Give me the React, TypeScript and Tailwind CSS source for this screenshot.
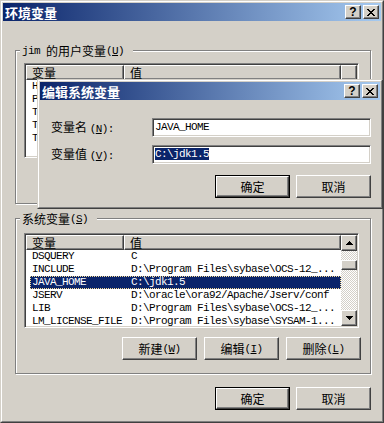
const CJK = "[font-family:'Noto_Sans_CJK_SC',sans-serif]";
const MONO =
  "[font-family:'Liberation_Mono','Noto_Sans_CJK_SC',monospace] text-[11px] tracking-[-0.6px]";
const RAISED =
  "border border-t-white border-l-white border-r-[#404040] border-b-[#404040] shadow-[inset_-1px_-1px_0_#808080] bg-[#d4d0c8]";
const SUNKEN =
  "border border-t-[#808080] border-l-[#808080] border-r-white border-b-white shadow-[inset_1px_1px_0_#404040,inset_-1px_-1px_0_#d4d0c8] bg-white";

const CLOSE = [
  "XX....XX",
  ".XX..XX.",
  "..XXXX..",
  "...XX...",
  "..XXXX..",
  ".XX..XX.",
  "XX....XX",
];
const UP = ["...X...", "..XXX..", ".XXXXX.", "XXXXXXX"];
const DOWN = [...UP].reverse();

// 用户变量：被编辑对话框挡住，只露出首字母
const USER_VARS = [["H", ""], ["P", ""], ["T", ""], ["T", ""], ["T", ""]];

const SYS_VARS = [
  ["DSQUERY", "C"],
  ["INCLUDE", "D:\\Program Files\\sybase\\OCS-12_..."],
  ["JAVA_HOME", "C:\\jdk1.5"],
  ["JSERV", "D:\\oracle\\ora92/Apache/Jserv/conf"],
  ["LIB", "D:\\Program Files\\sybase\\OCS-12_..."],
  ["LM_LICENSE_FILE", "D:\\Program Files\\sybase\\SYSAM-1..."],
];

// 像素小图标（标题栏关闭、滚动条箭头）
function Pixels({ rows }: { rows: string[] }) {
  return (
    <svg
      width={rows[0].length}
      height={rows.length}
      shapeRendering="crispEdges"
      className="block"
    >
      {rows.flatMap((r, y) =>
        r
          .split("")
          .map((c, x) =>
            c === "X" ? (
              <rect key={`${x}-${y}`} x={x} y={y} width="1" height="1" fill="#000" />
            ) : null
          )
      )}
    </svg>
  );
}

function Acc({ k, colon }: { k: string; colon?: boolean }) {
  return (
    <span className={MONO}>
      (<span className="underline underline-offset-[1px]">{k}</span>)
      {colon ? ":" : ""}
    </span>
  );
}

function TitleBar({ title }: { title: string }) {
  return (
    <div className="h-[18px] flex items-center justify-between bg-[linear-gradient(to_right,#0a246a,#a6caf0)]">
      <span className={`${CJK} pl-[2px] text-[13px] leading-[13px] font-bold text-white`}>
        {title}
      </span>
      <div className="flex gap-[2px] pr-[2px]">
        <div
          className={`${RAISED} w-[16px] h-[14px] flex items-center justify-center [font-family:'Liberation_Sans',sans-serif] text-[12px] leading-[12px] font-bold text-black`}
        >
          ?
        </div>
        <div className={`${RAISED} w-[16px] h-[14px] flex items-center justify-center`}>
          <Pixels rows={CLOSE} />
        </div>
      </div>
    </div>
  );
}

function Button({ children, def }: { children: React.ReactNode; def?: boolean }) {
  const inner = (
    <div
      className={`${RAISED} ${CJK} h-full w-full flex items-center justify-center text-[12px] leading-[12px] text-black`}
    >
      {children}
    </div>
  );
  if (def)
    return <div className="w-[75px] h-[23px] border border-black">{inner}</div>;
  return <div className="w-[75px] h-[23px]">{inner}</div>;
}

function GroupBox({
  label,
  className,
  children,
}: {
  label: React.ReactNode;
  className: string;
  children: React.ReactNode;
}) {
  return (
    <div
      className={`relative w-[356px] border border-[#808080] shadow-[1px_1px_0_#fff,inset_1px_1px_0_#fff] ${className}`}
    >
      <div
        className={`${CJK} absolute -top-[7px] left-[4px] h-[13px] pl-[2px] pr-[9px] bg-[#d4d0c8] flex items-center text-[12px] leading-[12px] text-black whitespace-nowrap`}
      >
        {label}
      </div>
      {children}
    </div>
  );
}

function HeaderCell({ children, w }: { children?: React.ReactNode; w: string }) {
  return (
    <div
      className={`${w} h-[15px] shrink-0 flex items-center pl-[5px] border border-t-white border-l-white border-r-[#404040] border-b-[#404040] shadow-[inset_-1px_-1px_0_#808080] bg-[#d4d0c8] ${CJK} text-[12px] leading-[12px] text-black`}
    >
      {children}
    </div>
  );
}

function ScrollBar() {
  return (
    <div className="w-[16px] h-full shrink-0 flex flex-col">
      <div className={`${RAISED} h-[16px] flex items-center justify-center`}>
        <Pixels rows={UP} />
      </div>
      <div className="flex-1 flex flex-col bg-[repeating-conic-gradient(#ffffff_0_25%,#d4d0c8_0_50%)] [background-size:2px_2px]">
        <div className={`${RAISED} h-[10px] mt-[9px]`} />
      </div>
      <div className={`${RAISED} h-[16px] flex items-center justify-center`}>
        <Pixels rows={DOWN} />
      </div>
    </div>
  );
}

function ListView({
  rows,
  selected,
  scroll,
}: {
  rows: string[][];
  selected?: number;
  scroll?: boolean;
}) {
  return (
    <div className={`${SUNKEN} w-[335px] h-[95px] p-[1px]`}>
      <div className="h-full flex overflow-hidden">
        <div className="w-[315px] shrink-0 flex flex-col">
          <div className="flex">
            <HeaderCell w="w-[98px]">变量</HeaderCell>
            <HeaderCell w="w-[217px]">值</HeaderCell>
          </div>
          {rows.map(([name, value], i) => (
            <div key={i} className="flex h-[13px] shrink-0 pl-[4px]">
              <div
                className={`flex flex-1 items-center whitespace-nowrap ${MONO} leading-[13px] ${
                  i === selected
                    ? "bg-[#0a246a] text-white outline outline-1 outline-dotted outline-[#f5db95] -outline-offset-1"
                    : "text-black"
                }`}
              >
                <span className="w-[94px] shrink-0 pl-[2px] overflow-hidden">{name}</span>
                <span className="pl-[7px]">{value}</span>
              </div>
            </div>
          ))}
        </div>
        {scroll ? <ScrollBar /> : <HeaderCell w="w-[16px]" />}
      </div>
    </div>
  );
}

function Edit({ children }: { children: React.ReactNode }) {
  return (
    <div className={`${SUNKEN} w-[219px] h-[19px] pl-[2px] flex items-center`}>
      <span className={`${MONO} leading-[13px] text-black whitespace-nowrap`}>{children}</span>
    </div>
  );
}

function EditDialog() {
  return (
    <div className="absolute left-[36px] top-[78px] w-[346px] h-[130px] border border-t-[#d4d0c8] border-l-[#d4d0c8] border-r-[#404040] border-b-[#404040] bg-[#d4d0c8]">
      <div className="h-full border border-t-white border-l-white border-r-[#808080] border-b-[#808080] p-[1px] flex flex-col">
        <TitleBar title="编辑系统变量" />
        <div className="pl-[11px] pr-[9px] pt-[18px] flex flex-col">
          <div className="flex items-center h-[19px]">
            <div className={`${CJK} w-[101px] text-[12px] leading-[12px] text-black`}>
              变量名 <Acc k="N" colon />
            </div>
            <Edit>JAVA_HOME</Edit>
          </div>
          <div className="flex items-center h-[19px] mt-[8px]">
            <div className={`${CJK} w-[101px] text-[12px] leading-[12px] text-black`}>
              变量值 <Acc k="V" colon />
            </div>
            <Edit>
              <span className="bg-[#0a246a] text-white">C:\jdk1.5</span>
            </Edit>
          </div>
          <div className="mt-[11px] flex justify-end gap-[6px]">
            <Button def>确定</Button>
            <Button>取消</Button>
          </div>
        </div>
      </div>
    </div>
  );
}

export default function App() {
  return (
    <div className={`${CJK} w-[384px] h-[423px] bg-[#d4d0c8]`}>
      <div className="relative w-[384px] h-[423px] border border-t-[#d4d0c8] border-l-[#d4d0c8] border-r-[#404040] border-b-[#404040]">
        <div className="h-full border border-t-white border-l-white border-r-[#808080] border-b-[#808080] p-[1px] flex flex-col">
          <TitleBar title="环境变量" />
          <div className="pl-[12px] flex flex-col">
            <GroupBox
              className="mt-[29px] h-[154px] pl-[8px] pt-[12px]"
              label={
                <>
                  <span className={MONO}>jim&nbsp;</span>的用户变量 <Acc k="U" />
                </>
              }
            >
              <ListView rows={USER_VARS} />
            </GroupBox>
            <GroupBox
              className="mt-[14px] h-[156px] pl-[8px] pt-[14px]"
              label={
                <>
                  系统变量 <Acc k="S" />
                </>
              }
            >
              <ListView rows={SYS_VARS} selected={2} scroll />
              <div className="mt-[9px] pr-[9px] flex justify-end gap-[7px]">
                <Button>
                  新建 <Acc k="W" />
                </Button>
                <Button>
                  编辑 <Acc k="I" />
                </Button>
                <Button>
                  删除 <Acc k="L" />
                </Button>
              </div>
            </GroupBox>
            <div className="w-[356px] mt-[13px] flex justify-end gap-[6px]">
              <Button def>确定</Button>
              <Button>取消</Button>
            </div>
          </div>
        </div>
        <EditDialog />
      </div>
    </div>
  );
}
